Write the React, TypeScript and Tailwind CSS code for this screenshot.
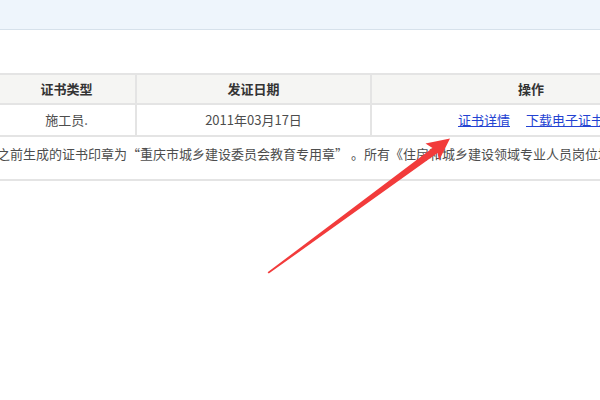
const rows = [
  { type: '施工员.', date: '2011年03月17日' },
];

function Arrow() {
  return (
    <svg className="absolute left-0 top-0 pointer-events-none" width="600" height="400" viewBox="0 0 600 400">
      <polygon
        points="450,138.5 425.5,143.5 432.5,148 267.6,272.3 268.8,273.6 437.5,153 439,160.5"
        fill="#f23b3b"
      />
    </svg>
  );
}

export default function App() {
  return (
    <div
      className="relative w-[600px] h-[400px] overflow-hidden bg-white text-[13px] text-[#4d4d4d]"
      style={{ fontFamily: '"Noto Sans CJK SC", "Noto Sans", sans-serif' }}
    >
      <div className="h-[30px] bg-[#eef5fc] border-b border-[#d6e1eb]" />

      <div className="mt-[43px] -ml-[4px]">
        <table className="border-collapse w-[694px] table-fixed">
          <colgroup>
            <col className="w-[139px]" />
            <col className="w-[235px]" />
            <col className="w-[320px]" />
          </colgroup>
          <thead>
            <tr className="h-[30px] bg-[#f5f5f3] text-[#333]">
              <th className="border-2 border-[#e4e4e4] font-bold">证书类型</th>
              <th className="border-2 border-[#e4e4e4] font-bold">发证日期</th>
              <th className="border-2 border-[#e4e4e4] font-bold">操作</th>
            </tr>
          </thead>
          <tbody>
            {rows.map((r) => (
              <tr key={r.date} className="h-[32px]">
                <td className="border-2 border-[#e4e4e4] text-center">{r.type}</td>
                <td className="border-2 border-[#e4e4e4] text-center">{r.date}</td>
                <td className="border-2 border-[#e4e4e4] text-center whitespace-nowrap">
                  <a href="#" className="text-[#2342d2] underline">证书详情</a>
                  <a href="#" className="text-[#2342d2] underline ml-[16px]">下载电子证书</a>
                </td>
              </tr>
            ))}
            <tr className="h-[44px]">
              <td colSpan={3} className="border-2 border-[#e4e4e4] border-l-0 align-top pt-[7px] whitespace-nowrap">
                之前生成的证书印章为“重庆市城乡建设委员会教育专用章” 。所有《住房和城乡建设领域专业人员岗位培训考核合格证书》
              </td>
            </tr>
          </tbody>
        </table>
      </div>

      <Arrow />
    </div>
  );
}
